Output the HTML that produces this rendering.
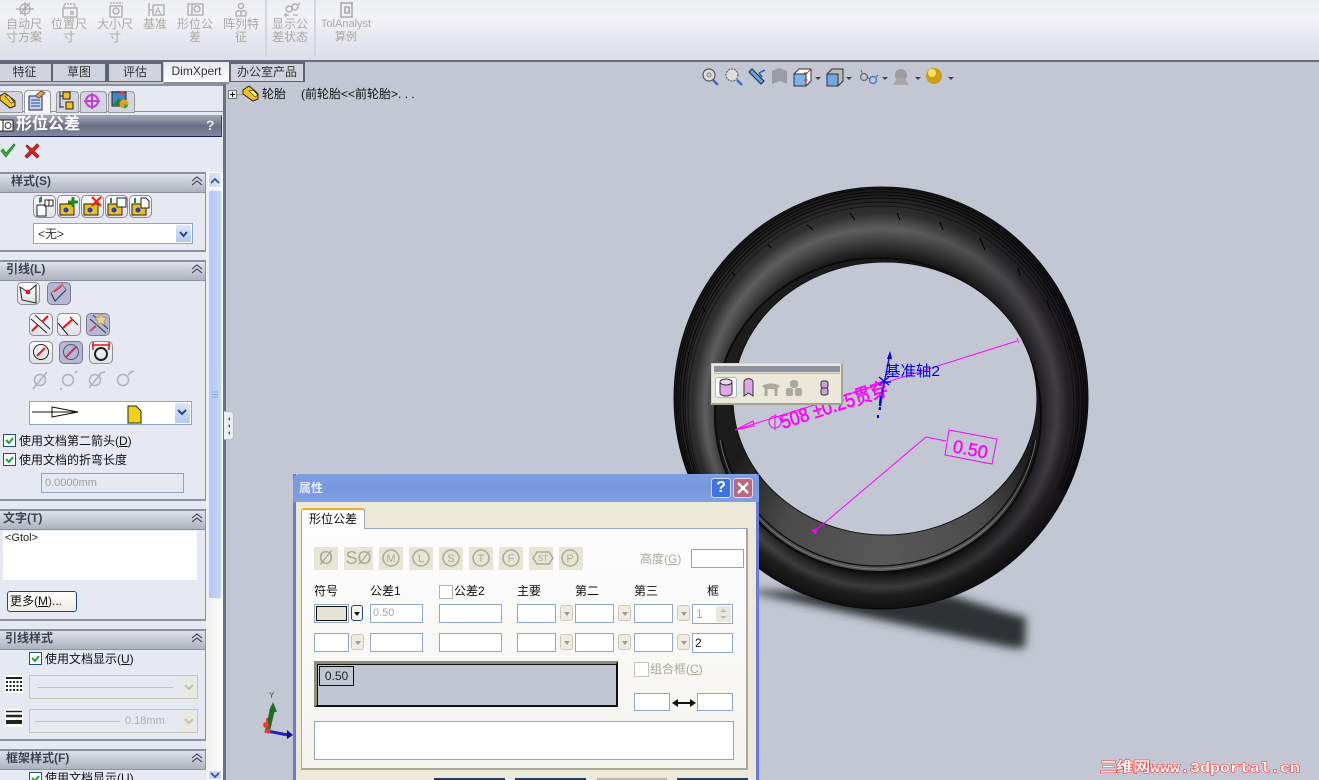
<!DOCTYPE html>
<html><head><meta charset="utf-8"><style>
html,body{margin:0;padding:0;width:1319px;height:780px;overflow:hidden;background:#c2c7d3}
body{position:relative;font:12px/14px "Liberation Sans","WenQuanYi Zen Hei","Noto Sans CJK SC",sans-serif;color:#111}
div,svg,span.a{position:absolute}
.n{white-space:nowrap}
.tb{color:#a9a9a2;text-align:center;white-space:nowrap;line-height:13px}
.tab{top:62px;height:17px;background:#d1d4df;border:2px solid #5f6373;border-bottom:1px solid #5f6373;text-align:center;line-height:17px;color:#333}
.hd{left:0;width:205px;height:18px;background:linear-gradient(#dfe1e9,#aeb2bf);border-top:2px solid #8d909e;border-bottom:1px solid #8d909e;border-right:1px solid #8d909e;font-weight:bold;color:#3d4152;line-height:15px}
.gb{left:0;width:205px;border-right:1px solid #8d909e;border-bottom:2px solid #8d909e}
.ib{background:linear-gradient(#fbfbfb,#e0e1e8);border:1px solid #8c8c94;border-radius:5px;box-sizing:border-box}
.on{background:#b6b7d4;border-color:#7b7b90}
.sel{background:#fff;border:1px solid #8da6bf;box-sizing:border-box}
.arr{background:linear-gradient(#dbe6fb,#b5c9ee)}
.ck{width:13px;height:13px;background:#fff;border:1px solid #1c5180;box-sizing:border-box}
.in{background:#fff;border:1px solid #8ea6bf;box-sizing:border-box;height:19px}
.dd{background:#eeece0;border:1px solid #c9c7b5;border-radius:3px;width:13px;height:16px;box-sizing:border-box}
.dd:after{content:"";position:absolute;left:3px;top:6px;border:3px solid transparent;border-top:4px solid #999}
.sb{top:547px;height:23px;background:#e7e5d3;box-sizing:border-box}
.c{left:0;right:0;text-align:center;color:#a9a89c;white-space:nowrap}
</style></head><body>

<svg style="left:0;top:0" width="1319" height="780" viewBox="0 0 1319 780">
<defs>
<radialGradient id="tg" gradientUnits="userSpaceOnUse" cx="881" cy="398" r="211" fx="881" fy="464" gradientTransform="translate(881 398) scale(.981 1) translate(-881 -398)">
<stop offset=".72" stop-color="#0a0a0a"/><stop offset=".75" stop-color="#181818"/><stop offset=".785" stop-color="#303030"/><stop offset=".82" stop-color="#4a4a4a"/><stop offset=".85" stop-color="#5e5e5e"/><stop offset=".875" stop-color="#4a4a4a"/><stop offset=".905" stop-color="#303030"/><stop offset=".95" stop-color="#252525"/><stop offset="1" stop-color="#181818"/>
</radialGradient>
<linearGradient id="dk" x1="0" y1="0" x2="0" y2="1"><stop offset=".6" stop-color="#000" stop-opacity="0"/><stop offset=".9" stop-color="#000" stop-opacity=".38"/></linearGradient>
<linearGradient id="dr" x1="0" y1="0" x2="1" y2="0"><stop offset=".55" stop-color="#000" stop-opacity="0"/><stop offset=".95" stop-color="#100818" stop-opacity=".4"/></linearGradient>
<radialGradient id="wg" gradientUnits="userSpaceOnUse" cx="885" cy="555" r="175"><stop offset="0" stop-color="#595959"/><stop offset=".6" stop-color="#4a4a4a"/><stop offset="1" stop-color="#1c1c1c"/></radialGradient>
<clipPath id="cp"><rect x="660" y="180" width="450" height="310"/></clipPath>
<clipPath id="cb"><rect x="700" y="440" width="360" height="150"/></clipPath>
<filter id="bl" x="-10%" y="-30%" width="120%" height="160%"><feGaussianBlur stdDeviation="4.500"/></filter>
</defs>
<polygon points="740,590 950,595 1016,615 1026,617 1025,648 1012,648 740,590" fill="#2f3135" filter="url(#bl)"/>
<ellipse cx="881" cy="398" rx="207" ry="211" fill="url(#tg)" stroke="#0a0a0a"/>
<ellipse cx="881" cy="398" rx="207" ry="211" fill="url(#dk)"/>
<ellipse cx="881" cy="398" rx="207" ry="211" fill="url(#dr)"/>
<g clip-path="url(#cp)" fill="none" stroke="#000" stroke-width="1" stroke-opacity=".75">
<ellipse cx="881" cy="400" rx="205" ry="211"/><ellipse cx="881" cy="401" rx="203" ry="209"/><ellipse cx="881" cy="402" rx="201" ry="207"/><ellipse cx="881" cy="403" rx="198" ry="205"/><ellipse cx="881" cy="404" rx="196" ry="202" stroke-opacity=".55"/><ellipse cx="881" cy="406" rx="193" ry="200" stroke-opacity=".4"/>
<path stroke-opacity="1" d="M807 225l6 5M850 213l5 7M897 213l3 7M940 222l3 8M980 238l5 12M1018 268l2 8M1047 300l3 10M1067 340l3 10M768 245l3 3M733 273l2 3M703 307l2 5M690 350l-2 4"/>
</g>
<ellipse cx="878" cy="415" rx="163" ry="157" fill="url(#wg)" stroke="#0b0b0b" stroke-width="2"/>
<g clip-path="url(#cb)" fill="none">
<ellipse cx="878" cy="415" rx="160" ry="154" stroke="#8a8a8a" stroke-width=".6"/>
<ellipse cx="878" cy="414" rx="158" ry="152" stroke="#0b0b0b" stroke-width="1.200"/>
</g>
<ellipse cx="885" cy="398.5" rx="152" ry="136.5" fill="#c2c7d3" stroke="#111"/>

<g stroke="#f0f" fill="none" stroke-width="1">
<path d="M735 430L1017 341M1017 338l2 5"/>
<path d="M735 430l18-9 1 5z"/>
<circle cx="775" cy="422" r="6"/><path d="M775 414v16"/>
<path d="M815 531L926 437 946 441"/>
<path d="M949 430L997 439 992 464 945 455Z"/>
</g>
<path d="M811 530l7-2-2 6z" fill="#f0f"/>
<text transform="translate(783 429) rotate(-18)" fill="#f0f" stroke="#f0f" stroke-width=".5" font-size="20" font-family="Liberation Sans,WenQuanYi Zen Hei,sans-serif" textLength="112" lengthAdjust="spacingAndGlyphs">508 ±0.25贯穿</text>
<text transform="translate(952 452) rotate(11)" fill="#f0f" stroke="#f0f" stroke-width=".4" font-size="18" font-family="Liberation Sans,sans-serif">0.50</text>
<g stroke="#00e" fill="none" stroke-width="1.300">
<path d="M890 353L881 400M885 382l6 0M879 377l10 8M879 385l10-8"/>
<path d="M881 396l-1 10" stroke-width="2.500"/>
<path d="M880 407l-.5 3" stroke-width="2"/>
</g>
<path d="M890 351l-3 8 5 0z" fill="#00e"/>
<rect x="877" y="415" width="2" height="3" fill="#00e"/><rect x="879" y="408" width="2" height="2" fill="#00e"/>
<text x="885" y="376" fill="#00e" font-size="15" font-family="Liberation Sans,WenQuanYi Zen Hei,sans-serif" textLength="55" lengthAdjust="spacingAndGlyphs">基准轴2</text>
<!-- triad -->
<path d="M267 733L273 707" stroke="#1c6b23" stroke-width="5"/><path d="M273 702l-4 9 8 1z" fill="#1c6b23"/>
<path d="M267 731L288 735" stroke="#2222bb" stroke-width="3"/><path d="M293 735l-6-5 0 9z" fill="#10108f"/>
<circle cx="266" cy="725" r="3" fill="#f33"/><circle cx="268" cy="731" r="2.500" fill="#f33"/><path d="M267 718l0 8" stroke="#f33" stroke-width="2"/>
<text x="269" y="698" font-size="8" fill="#1c6b23" font-family="Liberation Sans,sans-serif">Y</text>
<!-- watermark -->
<text x="1100" y="772" font-size="14" font-weight="bold" font-family="Liberation Mono,WenQuanYi Zen Hei,sans-serif" fill="#fff" stroke="#f22" stroke-width="1" paint-order="stroke" textLength="200" lengthAdjust="spacingAndGlyphs">三维网www.3dportal.cn</text>
</svg>

<!-- top toolbar -->
<div style="left:0;top:0;width:1319px;height:60px;background:linear-gradient(#eceef2,#f3f3f7 30%,#e4e5ee 70%,#dcdee8)"></div>
<div style="left:0;top:60px;width:1319px;height:2px;background:#696c7b"></div>
<div style="left:265px;top:0;width:2px;height:57px;background:#d3d4dc"></div>
<div style="left:314px;top:0;width:2px;height:57px;background:#d3d4dc"></div>
<svg style="left:0;top:0" width="380" height="22" fill="none" stroke="#aaa" stroke-width="1.300">
<circle cx="25" cy="9" r="5"/><path d="M16 9h18M25 2v14M20 14l10-11"/>
<rect x="63" y="8" width="14" height="9"/><path d="M64 4h11v4H64z" stroke-dasharray="2 1"/><circle cx="72" cy="13" r="1.500"/>
<rect x="110" y="6" width="12" height="11"/><circle cx="116" cy="11" r="3"/><path d="M110 3h13" stroke-dasharray="2 1"/>
<path d="M149 3v13M149 10h4"/><rect x="153" y="5" width="11" height="10"/><text x="155" y="14" font-size="9" fill="#aaa" stroke="none">A</text>
<rect x="188" y="4" width="15" height="11"/><circle cx="197" cy="9" r="3"/><path d="M192 4v11"/>
<circle cx="241" cy="6" r="2.500"/><path d="M236 12a3 3 0 0 1 5 0M241 12a3 3 0 0 1 5 0M236 12v4h5v-4M241 12v4h5v-4"/>
<circle cx="289" cy="9" r="3"/><circle cx="295" cy="7" r="3"/><path d="M298 5l2-2M284 15h5M293 15h5M286 13v4"/>
<path d="M340 3h13M340 17h13M341 3v14M352 3v14M345 7h4v6h-4z" stroke-width="1.600"/>
</svg>
<div class="tb" style="left:0;width:48px;top:18px">自动尺<br>寸方案</div>
<div class="tb" style="left:45px;width:48px;top:18px">位置尺<br>寸</div>
<div class="tb" style="left:91px;width:48px;top:18px">大小尺<br>寸</div>
<div class="tb" style="left:131px;width:48px;top:18px">基准</div>
<div class="tb" style="left:171px;width:48px;top:18px">形位公<br>差</div>
<div class="tb" style="left:217px;width:48px;top:18px">阵列特<br>征</div>
<div class="tb" style="left:266px;width:48px;top:18px">显示公<br>差状态</div>
<div class="tb" style="left:316px;width:60px;top:18px;font-size:11px">TolAnalyst<br>算例</div>

<!-- command tabs -->
<div class="tab" style="left:-4px;width:53px">特征</div>
<div class="tab" style="left:51px;width:52px">草图</div>
<div class="tab" style="left:107px;width:52px">评估</div>
<div class="tab" style="left:229px;width:72px">办公室产品</div>
<div style="left:164px;top:62px;width:65px;height:20px;background:linear-gradient(#e8e9f0,#fff);border-bottom:2px solid #8a8d9a;text-align:center;line-height:19px;color:#333">DimXpert</div>

<!-- left panel -->
<div style="left:0;top:84px;width:223px;height:696px;background:#e6e8f2;border-top:2px solid #8d909e;box-sizing:border-box"></div>
<div style="left:223px;top:84px;width:3px;height:696px;background:#6e717f"></div>
<div style="left:0;top:111px;width:223px;height:1px;background:#8d909e"></div>
<div style="left:-6px;top:91px;width:27px;height:20px;background:#d3d6e2;border:1px solid #999;border-radius:4px 4px 0 0"></div>
<div style="left:24px;top:90px;width:25px;height:22px;background:#f5f6fa;border:1px solid #999;border-bottom:0;border-radius:4px 4px 0 0"></div>
<div style="left:56px;top:91px;width:21px;height:20px;background:#d3d6e2;border:1px solid #999;border-radius:4px 4px 0 0"></div>
<div style="left:80px;top:91px;width:25px;height:20px;background:#d3d6e2;border:1px solid #999;border-radius:4px 4px 0 0"></div>
<div style="left:108px;top:91px;width:25px;height:20px;background:#d3d6e2;border:1px solid #999;border-radius:4px 4px 0 0"></div>
<svg style="left:0;top:88px" width="140" height="24">
<path d="M0 8l5-3 10 8v5l-5 2-10-8z" fill="#f3c415" stroke="#222"/><path d="M5 8l4 0 5 6-3 1z" fill="#ffe765" stroke="#222" stroke-width=".6"/>
<rect x="29" y="8" width="13" height="14" fill="#bdd4f4" stroke="#225"/><path d="M31 12h9M31 15h9M31 18h9" stroke="#447" /><path d="M35 8l6-5 4 2-6 5z" fill="#d8a85a" stroke="#754"/>
<path d="M60 4v16M60 8h4M60 19h4" stroke="#222"/><rect x="63" y="4" width="7" height="7" fill="#f3c415" stroke="#222"/><rect x="66" y="14" width="7" height="7" fill="#f3c415" stroke="#222"/>
<circle cx="92" cy="13" r="6" fill="none" stroke="#c040d0" stroke-width="2"/><path d="M84 13h16M92 5v16" stroke="#c040d0" stroke-width="2"/>
<rect x="112" y="4" width="14" height="14" fill="#3e88c8" stroke="#222"/><path d="M112 18l7-8 7 8z" fill="#2c7a30"/><circle cx="124" cy="16" r="4.500" fill="#e8a020"/><path d="M124 16v4.500a4.500 4.500 0 0 0 4-3z" fill="#3a3"/><circle cx="122" cy="5" r="2" fill="#e33"/>
</svg>

<!-- title -->
<div style="left:0;top:115px;width:222px;height:22px;box-sizing:border-box;background:linear-gradient(#a3a5b6,#6c6e85 50%,#85879c);border-bottom:1px solid #1b1c55;border-top:1px solid #9fa1b5;border-right:1px solid #3a3b68"></div>
<svg style="left:0;top:119px" width="16" height="13"><rect x="-4" y="1" width="17" height="11" fill="#fff" stroke="#222"/><path d="M3 1v11" stroke="#222"/><circle cx="8" cy="6.500" r="3" fill="none" stroke="#333"/></svg>
<div class="n" style="left:16px;top:116px;color:#fff;font-size:16px;font-weight:bold;line-height:17px">形位公差</div>
<div style="left:206px;top:117px;color:#e8e8ee;font-size:14px;font-weight:bold;line-height:16px">?</div>
<svg style="left:0;top:142px" width="44" height="18">
<path d="M1 9l5 6L15 3l-1-1-8 9-3-4z" fill="#3bb33b" stroke="#1a7a1a" stroke-width=".8"/>
<path d="M27 3l5 4 5-5 2 2-5 5 5 5-2 2-5-5-5 5-2-2 5-5-4-5z" fill="#e52020" stroke="#9a1010" stroke-width=".8"/>
</svg>

<!-- scrollbar -->
<div style="left:206px;top:172px;width:17px;height:608px;background:linear-gradient(90deg,#eff0ee,#fdfdf9)"></div>
<div style="left:208px;top:172px;width:14px;height:16px;background:linear-gradient(90deg,#c9d7f6,#dde6fb);border:1px solid #fff;box-sizing:border-box"></div>
<div style="left:208px;top:190px;width:14px;height:409px;background:linear-gradient(90deg,#b6c9f2,#c6d5f8);border:1px solid #eef;box-sizing:border-box"></div>
<div style="left:208px;top:770px;width:14px;height:10px;background:#c9d7f6;border:1px solid #fff;box-sizing:border-box"></div>
<svg style="left:208px;top:172px" width="14" height="610" fill="none" stroke="#2f4f88" stroke-width="1.600"><path d="M3 11l4-4 4 4"/><path d="M3 601l4 4 4-4"/><path d="M4 220h6M4 222.500h6M4 225h6" stroke="#8fa6d8" stroke-width="1"/></svg>
<div style="left:224px;top:411px;width:10px;height:29px;background:#eceef4;border:1px solid #b8bac6;border-left:0;box-sizing:border-box;color:#446;font-size:8px;line-height:8px;border-radius:0 4px 4px 0"></div>
<svg style="left:225px;top:416px" width="8" height="20" fill="#4a4f8a"><path d="M5 1l-2 2 2 2zM5 8l-2 2 2 2zM5 15l-2 2 2 2z"/></svg>

<!-- group 样式 -->
<div class="gb" style="top:172px;height:78px"></div>
<div class="hd" style="top:172px"><span style="margin-left:11px">样式(S)</span></div>
<div class="gb" style="top:260px;height:239px"></div>
<div class="hd" style="top:260px"><span style="margin-left:6px">引线(L)</span></div>
<div class="gb" style="top:509px;height:110px"></div>
<div class="hd" style="top:509px"><span style="margin-left:3px">文字(T)</span></div>
<div class="gb" style="top:629px;height:110px"></div>
<div class="hd" style="top:629px"><span style="margin-left:5px">引线样式</span></div>
<div class="hd" style="top:749px"><span style="margin-left:6px">框架样式(F)</span></div>
<svg style="left:190px;top:172px" width="14" height="600" fill="none" stroke="#3a4050" stroke-width="1.100">
<path d="M2 9l5-4 5 4M2 13l5-4 5 4M2 97l5-4 5 4M2 101l5-4 5 4M2 346l5-4 5 4M2 350l5-4 5 4M2 466l5-4 5 4M2 470l5-4 5 4M2 586l5-4 5 4M2 590l5-4 5 4"/>
</svg>

<!-- style buttons -->
<div class="ib" style="left:33px;top:195px;width:23px;height:23px"></div>
<div class="ib" style="left:57px;top:195px;width:23px;height:23px"></div>
<div class="ib" style="left:81px;top:195px;width:23px;height:23px"></div>
<div class="ib" style="left:105px;top:195px;width:23px;height:23px"></div>
<div class="ib" style="left:129px;top:195px;width:23px;height:23px"></div>
<svg style="left:33px;top:195px" width="120" height="23">
<path d="M4 10h7l2 2v9H4z" fill="#fff" stroke="#222"/><path d="M6 8V3l3-2v6z" fill="#2a8a30"/><rect x="12" y="5" width="8" height="6" fill="#fff" stroke="#222"/><path d="M16 5v6" stroke="#222"/>
<path d="M27 9h14v11H27z" fill="#eac11c" stroke="#222"/><circle cx="33" cy="15" r="2.500" fill="#2240d0"/><path d="M40 2v10M35 7h10" stroke="#1d8a24" stroke-width="3"/>
<path d="M51 9h14v11H51z" fill="#eac11c" stroke="#222"/><circle cx="57" cy="15" r="2.500" fill="#2240d0"/><path d="M59 2l9 9M68 2l-9 9" stroke="#e21" stroke-width="2.200"/>
<path d="M75 9h14v11H75z" fill="#eac11c" stroke="#222"/><circle cx="81" cy="15" r="2.500" fill="#2240d0"/><rect x="84" y="3" width="9" height="9" fill="#fff" stroke="#222"/><path d="M78 8V3" stroke="#2a8a30" stroke-width="2"/>
<path d="M99 9h14v11H99z" fill="#eac11c" stroke="#222"/><circle cx="105" cy="15" r="2.500" fill="#2240d0"/><path d="M108 3h5l3 3v7h-8z" fill="#fff" stroke="#222"/><path d="M102 8V3" stroke="#2a8a30" stroke-width="2"/>
</svg>
<div class="sel" style="left:33px;top:223px;width:160px;height:21px;line-height:20px;padding-left:4px;color:#333">&lt;无&gt;</div>
<div class="arr" style="left:176px;top:225px;width:15px;height:17px"></div>
<svg style="left:176px;top:225px" width="15" height="17" fill="none" stroke="#2b4a80" stroke-width="2"><path d="M4 7l3.500 4 3.500-4"/></svg>

<!-- leader buttons -->
<div class="ib" style="left:17px;top:282px;width:23px;height:23px"></div>
<div class="ib on" style="left:47px;top:282px;width:24px;height:23px"></div>
<div class="ib" style="left:29px;top:313px;width:24px;height:23px"></div>
<div class="ib" style="left:57px;top:313px;width:24px;height:23px"></div>
<div class="ib on" style="left:86px;top:313px;width:24px;height:23px"></div>
<div class="ib" style="left:29px;top:341px;width:24px;height:23px"></div>
<div class="ib on" style="left:59px;top:341px;width:24px;height:23px"></div>
<div class="ib" style="left:89px;top:341px;width:24px;height:23px"></div>
<svg style="left:0;top:270px" width="140" height="125" fill="none" stroke="#222">
<path d="M20 17l8 5 8-7v18l-14-3z"/><rect x="26" y="20" width="4" height="4" fill="#e11" stroke="none"/>
<path d="M51 23l4 8 11-11" stroke="#333"/><path d="M51 23l11-9 4 6" stroke="#b44" stroke-width=".8"/><path d="M54 22l8-6" stroke="#d33" stroke-width="1.200"/>
<path d="M31 49l16 14M35 45l15 14"/><path d="M32 61l6-6M48 46l-6 6" stroke="#e11" stroke-width="2"/>
<path d="M70 47l8 8M58 53l10 12"/><path d="M63 58l10-9" stroke="#e11" stroke-width="2"/>
<path d="M90 49l16 14M93 45l15 14" stroke="#333"/><path d="M99 44l2-3 2 3 4 1-3 3 1 4-4-2-4 2 1-4-3-3z" transform="translate(0 3)" fill="#e8d585" stroke="#a98"/><path d="M90 61l6-5" stroke="#c46" stroke-width="2"/>
<circle cx="41" cy="82" r="7.500"/><path d="M37 86l8-8" stroke="#e11" stroke-width="2"/>
<circle cx="71" cy="82" r="7.500" stroke="#556"/><path d="M66 87l10-10" stroke="#c35" stroke-width="2"/>
<circle cx="101" cy="84" r="6" stroke-width="2"/><path d="M92 75h18M93 72v8M109 72v8" stroke="#e11" stroke-width="1.500"/>
<g stroke="#b4b4b8" stroke-width="1.600"><circle cx="40" cy="110" r="5.500"/><path d="M33 119l14-17"/><circle cx="68" cy="110" r="5.500"/><path d="M62 118l-2 2M75 103l2-2"/><circle cx="95" cy="110" r="5.500"/><path d="M89 118l12-15 4-1"/><circle cx="123" cy="110" r="5.500"/><path d="M128 105l3-3 3-1"/></g>
</svg>
<div class="sel" style="left:29px;top:401px;width:163px;height:24px"></div>
<div class="arr" style="left:175px;top:403px;width:15px;height:20px"></div>
<svg style="left:30px;top:402px" width="160" height="22" fill="none" stroke="#111"><path d="M2 10h20M22 5v10l26-5zM22 10h26"/><path d="M98 4h8l5 5v12H98z" fill="#f3d213" stroke="#222"/><path d="M148 8l4 4 4-4" stroke="#2b4a80" stroke-width="2"/></svg>

<div class="ck" style="left:3px;top:434px"></div><div class="ck" style="left:3px;top:453px"></div>
<svg style="left:3px;top:434px" width="14" height="33" fill="none" stroke="#22a030" stroke-width="2"><path d="M3 6l3 3 4-5M3 25l3 3 4-5"/></svg>
<div class="n" style="left:19px;top:434px">使用文档第二箭头(<u>D</u>)</div>
<div class="n" style="left:19px;top:453px">使用文档的折弯长度</div>
<div class="sel" style="left:41px;top:473px;width:143px;height:20px;background:#e6e8f2;color:#a0a0a0;line-height:18px;padding-left:3px;font-size:11px">0.0000mm</div>

<!-- text -->
<div style="left:3px;top:531px;width:194px;height:49px;background:#fff;color:#222;font-size:11px;line-height:15px;padding-left:2px;box-sizing:border-box">&lt;Gtol&gt;</div>
<div style="left:7px;top:591px;width:70px;height:21px;box-sizing:border-box;border:1px solid #1c4a78;border-radius:3px;background:linear-gradient(#fff,#eeece2);line-height:19px;padding-left:2px">更多(<u>M</u>)...</div>

<!-- leader style -->
<div class="ck" style="left:29px;top:652px"></div>
<svg style="left:29px;top:652px" width="14" height="14" fill="none" stroke="#22a030" stroke-width="2"><path d="M3 6l3 3 4-5"/></svg>
<div class="n" style="left:45px;top:652px">使用文档显示(<u>U</u>)</div>
<div style="left:5px;top:675px;width:18px;height:18px;background:#fff"></div>
<svg style="left:5px;top:675px" width="18" height="18" stroke="#222"><path d="M1 3h16" stroke-width="2"/><path d="M1 7h16M1 11h16M1 15h16" stroke-dasharray="2 1.500" stroke-width="2"/></svg>
<div style="left:5px;top:709px;width:18px;height:18px;background:#fff"></div>
<svg style="left:5px;top:709px" width="18" height="18" stroke="#222"><path d="M1 2.500h16" stroke-width="1.500"/><path d="M1 7h16" stroke-width="2.500"/><path d="M1 13h16" stroke-width="4"/></svg>
<div style="left:29px;top:675px;width:169px;height:24px;border:1px solid #c8c7b6;box-sizing:border-box"></div>
<div style="left:37px;top:687px;width:136px;height:1px;background:#c0c0c0"></div>
<div style="left:29px;top:709px;width:169px;height:24px;border:1px solid #c8c7b6;box-sizing:border-box"></div>
<div style="left:35px;top:721px;width:85px;height:1px;background:#c0c0c0"></div>
<div class="n" style="left:125px;top:714px;color:#b0b0b0;font-size:11px">0.18mm</div>
<div style="left:181px;top:677px;width:15px;height:20px;background:#e9e9e0;border-radius:2px"></div>
<div style="left:181px;top:711px;width:15px;height:20px;background:#e9e9e0;border-radius:2px"></div>
<svg style="left:181px;top:677px" width="15" height="54" fill="none" stroke="#c0c0b8" stroke-width="2"><path d="M4 8l4 4 4-4M4 42l4 4 4-4"/></svg>
<div class="ck" style="left:29px;top:772px"></div>
<svg style="left:29px;top:772px" width="14" height="8" fill="none" stroke="#22a030" stroke-width="2"><path d="M3 6l3 3 4-5"/></svg>
<div class="n" style="left:45px;top:771px">使用文档显示(<u>U</u>)</div>

<!-- feature tree -->
<svg style="left:228px;top:85px" width="36" height="20"><rect x=".5" y="5.500" width="8" height="8" fill="#eee" stroke="#777"/><path d="M2 9.500h5M4.500 7v5" stroke="#111"/><path d="M9 9.500h5" stroke="#999"/><path d="M15 5l6-4 5 4 4 4v5l-5 2-10-7z" fill="#f3c415" stroke="#222"/><path d="M21 6l4-1 5 5-3 2z" fill="#ffe765" stroke="#222" stroke-width=".6"/></svg>
<div class="n" style="left:262px;top:87px">轮胎</div>
<div class="n" style="left:301px;top:87px">(前轮胎&lt;&lt;前轮胎&gt;. . .</div>

<!-- view toolbar -->
<svg style="left:700px;top:66px" width="260" height="24" fill="none">
<circle cx="9" cy="9" r="6" fill="#ddd" stroke="#555" stroke-width="1.200"/><circle cx="9" cy="9" r="2" stroke="#777"/><path d="M13 14l5 5" stroke="#3a70c0" stroke-width="2.500"/>
<circle cx="32" cy="9" r="6" fill="#ddd" stroke="#666" stroke-dasharray="2 1" stroke-width="1.200"/><path d="M37 14l5 5" stroke="#3a70c0" stroke-width="2.500"/>
<path d="M49 6l12 12 3-3L52 3z" fill="#62a8e8" stroke="#223"/><path d="M65 4l-6 3M59 7l3 4" stroke="#2a60b0" stroke-width="1.500"/>
<path d="M72 5l7-3 8 3v13l-7-3-8 3z" fill="#9c9ca6"/>
<path d="M94 8l5-5h12v12l-5 5H94z" fill="#fff" stroke="#333"/><path d="M94 8h12v12H94z" fill="#7fb2e8" stroke="#333"/><path d="M106 8l5-5M108 7h-4M108 14h-4" stroke="#d33"/>
<path d="M115 11l3 3 3-3z" fill="#444"/>
<path d="M127 8l5-5h11v12l-5 5h-11z" fill="#bbb" stroke="#333"/><path d="M127 8h11v12h-11z" fill="#6ea8e6" stroke="#333"/><path d="M153 11l3 3 3-3z" fill="#444" transform="translate(-7 0)"/>
<circle cx="164" cy="11" r="3.500" stroke="#666" stroke-width="1.200"/><circle cx="173" cy="14" r="3.500" stroke="#3a70c0" stroke-width="1.200"/><path d="M167 11l3 2M162 7l-1-3M176 11l2-2" stroke="#666"/>
<path d="M182 11l3 3 3-3z" fill="#444"/>
<circle cx="901" cy="9" r="6" fill="#9c9c9c" transform="translate(-700 0)"/><path d="M193 19l4-7h8l4 7z" fill="#a8a8a8"/>
<path d="M215 11l3 3 3-3z" fill="#444"/>
<circle cx="234" cy="10" r="8" fill="#c9a010"/><circle cx="232" cy="7" r="4" fill="#f8e060"/>
<path d="M248 11l3 3 3-3z" fill="#444"/>
</svg>

<!-- floating toolbar -->
<div style="left:711px;top:363px;width:132px;height:42px;box-sizing:border-box;background:#ebe8da;border:1px solid #d8d6c4;border-right:2px solid #a3a294;border-bottom:2px solid #a3a294"></div>
<div style="left:714px;top:366px;width:126px;height:6px;background:#8d909e"></div>
<div style="left:714px;top:373px;width:126px;height:1px;background:#b5b3a6"></div>
<div style="left:715px;top:377px;width:22px;height:21px;box-sizing:border-box;background:#fff;border:1px solid #9fb8d0;border-radius:3px"></div>
<svg style="left:715px;top:377px" width="125" height="24" stroke="#333">
<path d="M5 5v11a6 3 0 0 0 12 0V5" fill="#e0a6ea"/><ellipse cx="11" cy="5" rx="6" ry="3" fill="#f0d6f4"/>
<path d="M29 19V5a4 3 0 0 1 9 0v14l-4.500-3z" fill="#e0a6ea"/>
<path d="M47 9a11 6 0 0 1 18 0l-3 3h-12z" fill="#aaa9a0" stroke="none"/><path d="M51 19v-6a4 3 0 0 1 10 0v6" fill="none" stroke="#aaa9a0" stroke-width="3"/>
<g fill="#aaa9a0" stroke="none"><rect x="75" y="3" width="8" height="8" rx="3"/><rect x="71" y="11" width="7" height="8" rx="2"/><rect x="80" y="11" width="7" height="8" rx="2"/></g>
<rect x="106" y="4" width="7" height="7" rx="2" fill="#c9a0d8"/><rect x="106" y="11" width="7" height="7" rx="2" fill="#c9a0d8"/>
</svg>

<!-- dialog -->
<div style="left:293px;top:474px;width:466px;height:306px;background:#ece9d8;border-left:3px solid #6d78dc;border-right:3px solid #6d78dc;box-sizing:border-box"></div>
<div style="left:293px;top:474px;width:466px;height:28px;background:linear-gradient(#7d9fe2,#7897e0 40%,#7f9ee4);border-radius:6px 6px 0 0"></div>
<div class="n" style="left:299px;top:481px;color:#e4ecfb;font-weight:bold;line-height:15px">属性</div>
<div style="left:711px;top:478px;width:20px;height:20px;box-sizing:border-box;background:#3f74e0;border:1px solid #cfe0fa;border-radius:3px;color:#fff;font-weight:bold;font-size:16px;line-height:18px;text-align:center">?</div>
<div style="left:733px;top:478px;width:20px;height:20px;box-sizing:border-box;background:#b96a82;border:1px solid #e5d8e4;border-radius:3px"></div>
<svg style="left:733px;top:478px" width="20" height="20" stroke="#fff" stroke-width="2.400"><path d="M5 5l10 10M15 5L5 15"/></svg>
<div style="left:301px;top:528px;width:447px;height:242px;box-sizing:border-box;background:linear-gradient(#fdfdfe,#f4f3ee);border:1px solid #9aa7b5;border-right:2px solid #a8a89c;border-bottom:2px solid #a8a89c"></div>
<div style="left:301px;top:508px;width:64px;height:21px;box-sizing:border-box;background:#fdfdfe;border:1px solid #9aa7b5;border-top:2px solid #f4a62a;border-bottom:0;border-radius:3px 3px 0 0;text-align:center;line-height:18px">形位公差</div>

<div class="sb" style="left:314px;width:24px"><div class="c" style="top:4px;font-size:18px">Ø</div></div>
<div class="sb" style="left:344px;width:29px"><div class="c" style="top:4px;font-size:18px">SØ</div></div>
<div class="sb" style="left:379px;width:24px"></div>
<div class="sb" style="left:409px;width:24px"></div>
<div class="sb" style="left:439px;width:24px"></div>
<div class="sb" style="left:469px;width:24px"></div>
<div class="sb" style="left:499px;width:24px"></div>
<div class="sb" style="left:529px;width:24px"></div>
<div class="sb" style="left:559px;width:24px"></div>
<svg style="left:300px;top:545px" width="300" height="26" fill="none" stroke="#aaa99c" stroke-width="1.500"><circle cx="91" cy="13" r="8"/><circle cx="121" cy="13" r="8"/><circle cx="151" cy="13" r="8"/><circle cx="181" cy="13" r="8"/><circle cx="211" cy="13" r="8"/><path d="M233 13l4-6h12l4 6-4 6h-12z"/><circle cx="270" cy="13" r="8"/>
<g fill="#aaa99c" stroke="none" font-size="11" font-family="Liberation Sans,sans-serif" text-anchor="middle"><text x="91" y="17">M</text><text x="121" y="17">L</text><text x="151" y="17">S</text><text x="181" y="17">T</text><text x="211" y="17">F</text><text x="243" y="16" font-size="8">ST</text><text x="270" y="17">P</text></g></svg>
<div class="n" style="left:640px;top:552px;color:#a9a89c">高度(<u>G</u>)</div>
<div class="in" style="left:691px;top:549px;width:53px"></div>

<div class="n" style="left:314px;top:584px">符号</div>
<div class="n" style="left:370px;top:584px">公差1</div>
<div class="n" style="left:454px;top:584px">公差2</div>
<div class="n" style="left:517px;top:584px">主要</div>
<div class="n" style="left:575px;top:584px">第二</div>
<div class="n" style="left:634px;top:584px">第三</div>
<div class="n" style="left:707px;top:584px">框</div>
<div style="left:439px;top:585px;width:12px;height:12px;border:1px solid #b5b5aa;background:#fff"></div>

<div class="in" style="left:314px;top:604px;width:35px"></div>
<div style="left:316px;top:606px;width:31px;height:15px;box-sizing:border-box;background:#e4e3d6;border:1px solid #111"></div>
<div style="left:351px;top:605px;width:12px;height:16px;box-sizing:border-box;border:1px solid #1c4a78;border-radius:3px;background:#f6f5ee"></div>
<div style="left:354px;top:612px;border:3px solid transparent;border-top:4px solid #111"></div>
<div class="in" style="left:370px;top:604px;width:53px;color:#a8a8a8;line-height:17px;padding-left:2px;font-size:11px">0.50</div>
<div class="in" style="left:439px;top:604px;width:63px"></div>
<div class="in" style="left:517px;top:604px;width:39px"></div><div class="dd" style="left:560px;top:605px"></div>
<div class="in" style="left:575px;top:604px;width:39px"></div><div class="dd" style="left:618px;top:605px"></div>
<div class="in" style="left:634px;top:604px;width:39px"></div><div class="dd" style="left:677px;top:605px"></div>
<div class="in" style="left:692px;top:604px;width:41px;height:20px;color:#a8a8a8;line-height:18px;padding-left:3px">1</div>
<div style="left:716px;top:606px;width:15px;height:16px;background:#e9e8e0"></div>
<svg style="left:716px;top:606px" width="15" height="16" fill="#bbb"><path d="M4 6l3.500-3 3.500 3zM4 10l3.500 3 3.500-3z"/></svg>

<div class="in" style="left:314px;top:633px;width:35px"></div><div class="dd" style="left:351px;top:634px"></div>
<div class="in" style="left:370px;top:633px;width:53px"></div>
<div class="in" style="left:439px;top:633px;width:63px"></div>
<div class="in" style="left:517px;top:633px;width:39px"></div><div class="dd" style="left:560px;top:634px"></div>
<div class="in" style="left:575px;top:633px;width:39px"></div><div class="dd" style="left:618px;top:634px"></div>
<div class="in" style="left:634px;top:633px;width:39px"></div><div class="dd" style="left:677px;top:634px"></div>
<div class="in" style="left:692px;top:633px;width:41px;height:20px;line-height:18px;padding-left:2px">2</div>

<div style="left:314px;top:661px;width:304px;height:46px;box-sizing:border-box;background:#c2c6d2;border-top:3px solid #8e8c7c;border-left:3px solid #8e8c7c;border-right:2px solid #111;border-bottom:2px solid #111;box-shadow:inset 1px 1px 0 #111"></div>
<div style="left:319px;top:666px;width:35px;height:20px;box-sizing:border-box;border:1px solid #111;text-align:center;line-height:18px;color:#222;font-size:12px">0.50</div>
<div style="left:634px;top:662px;width:13px;height:13px;border:1px solid #c5c5ba;background:#fff"></div>
<div class="n" style="left:650px;top:662px;color:#a9a89c">组合框(<u>C</u>)</div>
<div class="in" style="left:634px;top:693px;width:36px;height:18px"></div>
<div class="in" style="left:697px;top:693px;width:36px;height:18px"></div>
<svg style="left:671px;top:696px" width="26" height="14" fill="#111"><path d="M1 7l6-4v3h12V3l6 4-6 4V8H7v3z"/></svg>
<div class="in" style="left:314px;top:721px;width:420px;height:39px"></div>
<div style="left:434px;top:778px;width:71px;height:2px;background:#1c3f6a"></div>
<div style="left:515px;top:778px;width:71px;height:2px;background:#1c3f6a"></div>
<div style="left:597px;top:778px;width:70px;height:2px;background:#b8b6a6"></div>
<div style="left:677px;top:778px;width:71px;height:2px;background:#1c3f6a"></div>
</body></html>
